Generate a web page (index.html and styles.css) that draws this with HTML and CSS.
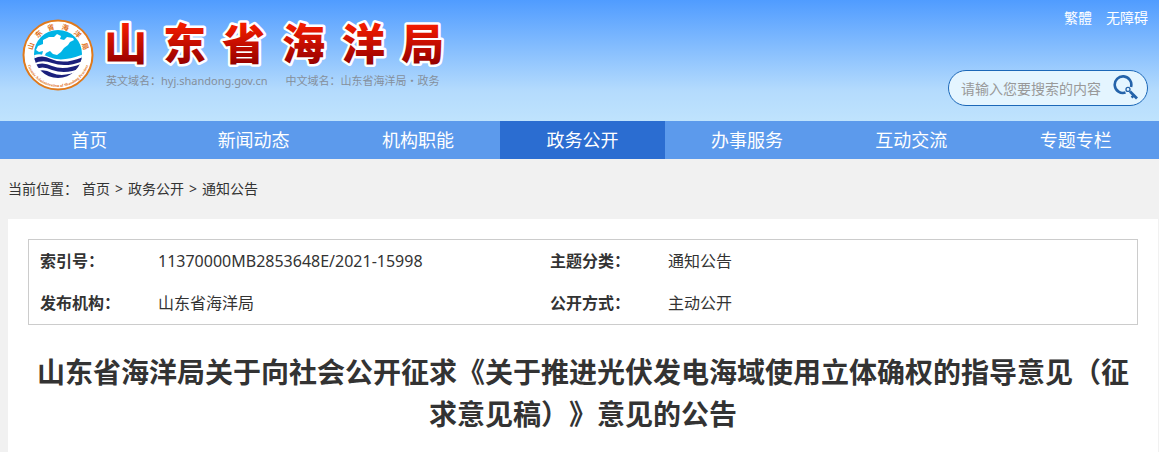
FILE: index.html
```html
<!DOCTYPE html>
<html lang="zh-CN">
<head>
<meta charset="utf-8">
<title>山东省海洋局</title>
<link rel="stylesheet" href="styles.css">
</head>
<body>
<header class="site-header">
  <a class="brand" href="#">
    <svg class="emblem" viewBox="0 0 72 72" role="img" aria-label="山东省海洋局徽标">
      <defs>
        <path id="arc-bottom" d="M4 36 A32 32 0 0 0 68 36"/>
        <clipPath id="disc"><circle cx="36" cy="35" r="24"/></clipPath>
      </defs>
      <circle cx="36" cy="36" r="34.500" fill="#fff" stroke="#e07a1c" stroke-width="2"/>
      <g clip-path="url(#disc)">
        <rect x="10" y="10" width="52" height="31" fill="#00b4e6"/>
        <path d="M10 37 Q18 33 27 38 Q40 44 62 35 V62 H10Z" fill="#fff"/>
        <path d="M11 40 Q20 35 29 40 Q42 46 61 38 V42 Q44 49 30 44 Q20 40 11 45Z" fill="#1a1f7c"/>
        <path d="M11 47 Q20 42 30 47 Q43 52 61 44 L59 49 Q44 56 30 51 Q20 46 12 51Z" fill="#1a1f7c"/>
        <path d="M14 53 Q21 49 30 54 Q42 59 58 51 Q50 61 36 60 Q22 60 14 53Z" fill="#1a1f7c"/>
        <path d="M14 31 L16 27 L21 25 L21 21 L27 18 L32 18 L35 15 L39 17 L38 20 L42 21 L45 18 L51 19 L52 21 L48 23 L46 26 L42 29 L39 33 L35 36 L31 35 L28 32 L24 34 L23 36 L20 36 L21 32 L17 33Z" fill="#fff"/>
      </g>
      <g class="emblem-name" text-anchor="middle">
        <text x="36" y="10" transform="rotate(-72 36 36)">山</text>
        <text x="36" y="10" transform="rotate(-43 36 36)">东</text>
        <text x="36" y="10" transform="rotate(-15 36 36)">省</text>
        <text x="36" y="10" transform="rotate(15 36 36)">海</text>
        <text x="36" y="10" transform="rotate(43 36 36)">洋</text>
        <text x="36" y="10" transform="rotate(72 36 36)">局</text>
      </g>
      <text class="emblem-latin"><textPath href="#arc-bottom" startOffset="50%" text-anchor="middle">Oceanic Administration of Shandong Province</textPath></text>
    </svg>
    <span class="brand-text">
      <svg class="wordmark" viewBox="0 0 350 56" role="img" aria-label="山东省海洋局">
        <defs>
          <linearGradient id="red" gradientUnits="userSpaceOnUse" x1="0" y1="8" x2="0" y2="48">
            <stop offset="0" stop-color="#f41c00"/>
            <stop offset="1" stop-color="#960000"/>
          </linearGradient>
        </defs>
        <text class="wordmark-text" y="44" x="2 61 120 180 240 299" fill="url(#red)">山东省海洋局</text>
      </svg>
      <span class="domains"><span>英文域名：hyj.shandong.gov.cn</span><span>中文域名：山东省海洋局・政务</span></span>
    </span>
  </a>
  <div class="header-tools">
    <div class="top-links"><a href="#">繁體</a><a href="#">无障碍</a></div>
    <form class="search">
      <input type="text" aria-label="搜索" placeholder="请输入您要搜索的内容">
      <button type="button" aria-label="搜索">
        <svg viewBox="0 0 26 26" width="26" height="26" fill="none" stroke="#2463aa">
          <path d="M12.500 17.600 A8.300 8.300 0 1 1 18 12" stroke-width="2.600"/>
          <circle cx="15" cy="14.400" r="2" stroke-width="1.300"/>
          <path d="M17 16.500 L24 23.500" stroke-width="2.800"/>
          <path d="M18.500 22.500 L21.500 20" stroke-width="2.400"/>
        </svg>
      </button>
    </form>
  </div>
</header>
<nav class="main-nav">
  <div class="nav-items">
    <a href="#">首页</a>
    <a href="#">新闻动态</a>
    <a href="#">机构职能</a>
    <a class="current" href="#">政务公开</a>
    <a href="#">办事服务</a>
    <a href="#">互动交流</a>
    <a href="#">专题专栏</a>
  </div>
</nav>
<div class="breadcrumb">
  <span class="breadcrumb-label">当前位置：</span>
  <a href="#">首页</a><span>&gt;</span><a href="#">政务公开</a><span>&gt;</span><a href="#">通知公告</a>
</div>
<main class="article">
  <table class="meta">
    <tr><th scope="row">索引号：</th><td class="wide">11370000MB2853648E/2021-15998</td><th scope="row">主题分类：</th><td>通知公告</td></tr>
    <tr><th scope="row">发布机构：</th><td>山东省海洋局</td><th scope="row">公开方式：</th><td>主动公开</td></tr>
  </table>
  <h1>山东省海洋局关于向社会公开征求《关于推进光伏发电海域使用立体确权的指导意见（征求意见稿）》意见的公告</h1>
</main>
</body>
</html>
```
FILE: styles.css
```css
* { box-sizing: border-box; }
body {
  margin: 0;
  background: #f1f1f1;
  color: #333;
  font-family: "Noto Sans", "Noto Sans CJK SC", sans-serif;
  font-size: 14px;
  text-spacing-trim: space-all;
}
a { color: inherit; text-decoration: none; }

.site-header {
  display: flex;
  justify-content: space-between;
  height: 121px;
  padding: 8px 11px 0 22px;
  background: linear-gradient(#509cff, #b4dbfd 75%, #bfe3fd);
}
.brand { display: flex; gap: 8px; padding-top: 11px; }
.emblem { width: 72px; height: 72px; }
.emblem-name { font-family: "Noto Sans CJK SC", sans-serif; font-size: 7px; font-weight: 700; fill: #e0701a; }
.emblem-latin { font-family: "Liberation Serif", serif; font-size: 4px; font-weight: 700; fill: #e0701a; }
.brand-text { display: flex; flex-direction: column; }
.wordmark { width: 350px; height: 56px; margin-top: -3px; overflow: visible; }
.wordmark-text {
  font-family: "Noto Sans CJK SC", sans-serif;
  font-size: 43px;
  font-weight: 900;
  stroke: #fff;
  stroke-width: 5px;
  stroke-linejoin: round;
  paint-order: stroke;
}
.domains {
  display: flex;
  gap: 18px;
  padding-left: 4px;
  font-size: 11px;
  line-height: 18px;
  color: #858f9b;
}

.header-tools { display: flex; flex-direction: column; align-items: flex-end; gap: 42px; }
.top-links { display: flex; gap: 14px; line-height: 20px; color: #fff; }
.search {
  display: flex;
  align-items: center;
  width: 200px;
  height: 36px;
  padding: 0 8px 0 12px;
  border: 1px solid #1c68b8;
  border-radius: 18px;
  background: #e4f5ff;
}
.search input {
  flex: 1;
  min-width: 0;
  padding: 0;
  border: 0;
  outline: 0;
  background: none;
  font: inherit;
}
.search input::placeholder { color: #999; }
.search button { display: flex; padding: 0; border: 0; background: none; }

.main-nav { background: #5c9aec; padding: 0 1px 0 7px; }
.nav-items { display: grid; grid-template-columns: repeat(7, 1fr); }
.nav-items a { color: #fff; font-size: 18px; line-height: 38px; text-align: center; }
.nav-items .current { background: #2b6dd1; }

.breadcrumb { display: flex; gap: 5px; padding: 20px 8px; line-height: 20px; white-space: nowrap; }
.breadcrumb-label { width: 69px; }

.article { margin: 0 1px 0 8px; padding: 20px 20px 0; background: #fff; }
.meta {
  width: 100%;
  table-layout: fixed;
  border: 1px solid #ccc;
  border-spacing: 0;
  font-size: 16px;
  line-height: 42px;
  text-align: left;
}
.meta th, .meta td { padding: 0 0 0 11px; }
.meta th { width: 118px; }
.meta .wide { width: 392px; }
h1 {
  margin: 0;
  padding: 26px 0 17px;
  font-size: 28px;
  line-height: 42px;
  text-align: center;
}
```
